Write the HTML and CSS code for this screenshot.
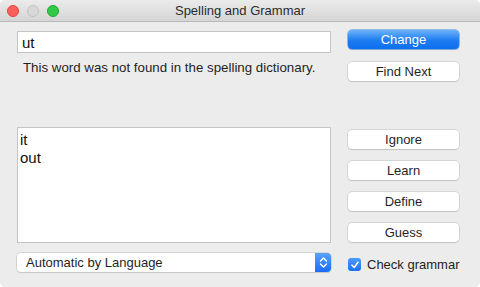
FILE: index.html
```html
<!DOCTYPE html>
<html lang="en">
<head>
	<meta charset="UTF-8">
	<title>Spelling and Grammar</title>
	<link rel="stylesheet" href="styles.css">
</head>
<body>
	<section class="window">
		<header class="titlebar">
			<div class="lights">
				<span class="light red"></span>
				<span class="light off"></span>
				<span class="light green"></span>
			</div>
			<h1>Spelling and Grammar</h1>
		</header>
		<div class="content">
			<div class="left">
				<div class="field">ut</div>
				<p class="msg">This word was not found in the spelling dictionary.</p>
				<ul class="guesses">
					<li>it</li>
					<li>out</li>
				</ul>
				<div class="popup">
					<span>Automatic by Language</span>
					<span class="stepper">
						<svg width="9" height="13" viewBox="0 0 9 13"><path d="M1.5 5 L4.5 2 L7.5 5 M1.5 8 L4.5 11 L7.5 8" fill="none" stroke="#fff" stroke-width="1.4" stroke-linecap="round" stroke-linejoin="round"/></svg>
					</span>
				</div>
			</div>
			<div class="right">
				<a href="javascript:;" class="btn primary">Change</a>
				<a href="javascript:;" class="btn next">Find Next</a>
				<a href="javascript:;" class="btn ignore">Ignore</a>
				<a href="javascript:;" class="btn">Learn</a>
				<a href="javascript:;" class="btn">Define</a>
				<a href="javascript:;" class="btn">Guess</a>
				<label class="check">
					<span class="box">
						<svg width="10" height="10" viewBox="0 0 10 10"><path d="M2 5.2 L4.2 7.5 L8 2.3" fill="none" stroke="#fff" stroke-width="1.6" stroke-linecap="round" stroke-linejoin="round"/></svg>
					</span>
					Check grammar
				</label>
			</div>
		</div>
	</section>
</body>
</html>
```

FILE: styles.css
```css
*{margin: 0; padding: 0; box-sizing: border-box;}
li{list-style: none;}
body{background: #fff; font-family: "Liberation Sans", Arial, sans-serif; font-size: 13px; color: #1f1f1f;}
.window{width: 480px; height: 287px; background: #ececec; border-radius: 5px; overflow: hidden;}

.titlebar{height: 22px; display: flex; align-items: center; position: relative; background: linear-gradient(#ebebeb, #d5d5d5); border-bottom: 1px solid #b9b9b9;}
.lights{display: flex; gap: 8px; padding-left: 7px;}
.light{width: 12px; height: 12px; border-radius: 50%;}
.light.red{background: #fc605c; border: 1px solid #e0443e;}
.light.off{background: #d8d8d8; border: 1px solid #c2c2c2;}
.light.green{background: #34c84a; border: 1px solid #1aab29;}
.titlebar h1{position: absolute; left: 0; right: 0; text-align: center; font-weight: normal; font-size: 13px; color: #2b2b2b; top: 3px;}

.content{display: flex; padding: 8px 0 0 17px;}
.left{width: 314px; display: flex; flex-direction: column;}
.right{width: 111px; margin-left: 17px; display: flex; flex-direction: column;}

.field{height: 22px; margin-top: 1px; background: #fff; border: 1px solid #c4c4c4; padding: 2px 4px; font-size: 15px; color: #111;}
.msg{margin: 7px 0 0 6px; line-height: 16px; font-size: 13.3px;}
.guesses{height: 116px; margin-top: 51px; background: #fff; border: 1px solid #c4c4c4; padding: 3px 2px; font-size: 15px; line-height: 18px; color: #111;}
.popup{height: 19px; margin-top: 10px; background: #fff; border-radius: 4px; box-shadow: 0 0 0 0.5px #bdbdbd, 0 1px 1px rgba(0,0,0,.12); display: flex; align-items: center; justify-content: space-between; padding-left: 9px;}
.stepper{width: 16px; height: 19px; background: linear-gradient(#5aa2fb, #1a6cf6); border-radius: 0 4px 4px 0; display: flex; align-items: center; justify-content: center;}

.btn{height: 19px; display: flex; align-items: center; justify-content: center; text-decoration: none; color: #1f1f1f; background: #fff; border-radius: 4px; box-shadow: 0 0 0 0.5px #bdbdbd, 0 1px 1px rgba(0,0,0,.15); margin-top: 12px;}
.btn.primary{margin-top: 0; height: 19px; color: #fff; background: linear-gradient(#6cb3fa, #1d7cf2 55%, #0d6ff0); box-shadow: 0 0 0 0.5px #3a82e4, 0 1px 1px rgba(0,0,0,.15);}
.btn.next{margin-top: 13px;}
.btn.ignore{margin-top: 49px;}
.check{display: flex; align-items: center; gap: 6px; margin-top: 15px; font-size: 13px; white-space: nowrap;}
.box{width: 13px; height: 13px; flex: none; border-radius: 3px; background: linear-gradient(#4c9cf9, #1b6ff5); display: flex; align-items: center; justify-content: center;}
```
